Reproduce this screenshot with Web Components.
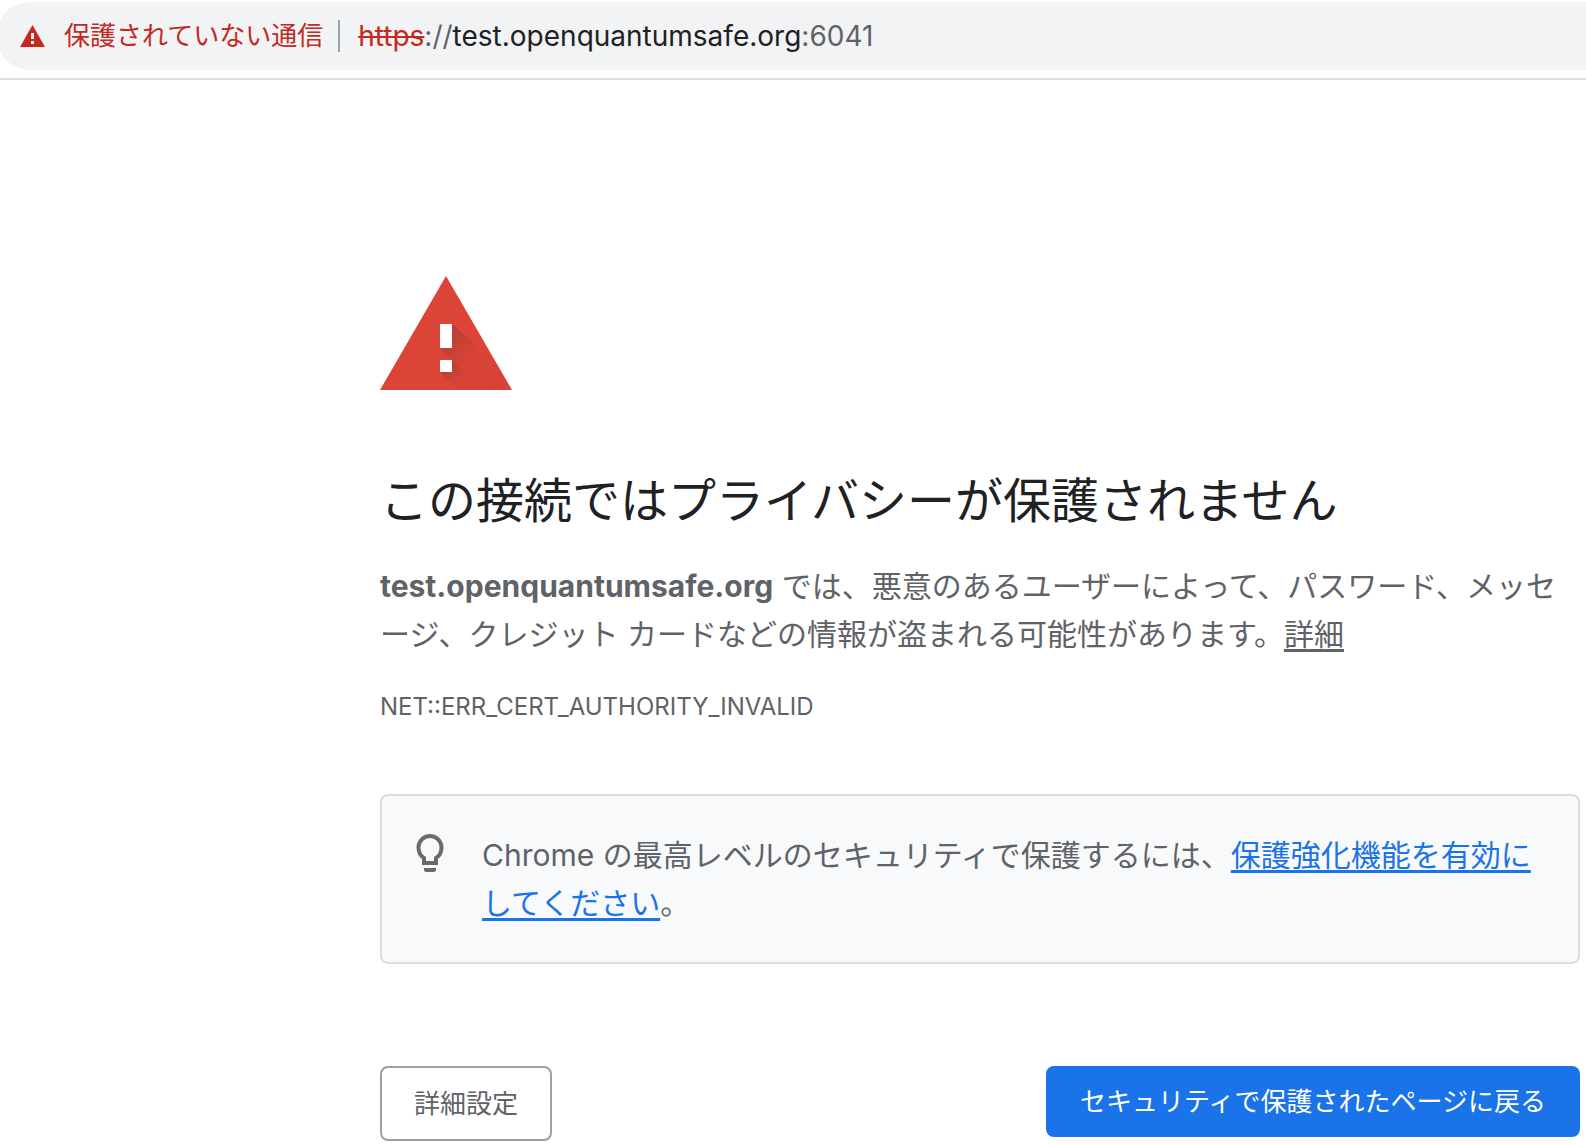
<!DOCTYPE html>
<html lang="ja">
<head>
<meta charset="utf-8">
<title>プライバシー エラー</title>
<style>
  body {
    margin: 0;
    background: #fff;
    color: #5f6368;
    font-family: Inter, "Noto Sans CJK JP", sans-serif;
    font-size: 30px;
    line-height: 48px;
  }
</style>
</head>
<body>

<address-bar>
  <span slot="status">保護されていない通信</span>
  <span slot="scheme">https</span>
  <span slot="host">test.openquantumsafe.org</span>
  <span slot="port">:6041</span>
</address-bar>

<security-interstitial>
  <span slot="heading">この接続ではプライバシーが保護されません</span>
  <strong slot="host">test.openquantumsafe.org</strong>
  <span slot="message">では、悪意のあるユーザーによって、パスワード、メッセージ、クレジット カードなどの情報が盗まれる可能性があります。</span>
  <span slot="code">NET::ERR_CERT_AUTHORITY_INVALID</span>
  <tip-box slot="tip">Chrome の最高レベルのセキュリティで保護するには、<a href="#enhanced">保護強化機能を有効にしてください</a>。</tip-box>
  <action-button slot="actions">詳細設定</action-button>
  <action-button slot="actions" primary>セキュリティで保護されたページに戻る</action-button>
</security-interstitial>

<script>
function attach(element, html) {
  const template = document.createElement('template')
  template.innerHTML = html
  element.attachShadow({ mode: 'open' }).append(template.content.cloneNode(true))
}

class AddressBar extends HTMLElement {
  constructor() {
    super()
    attach(this, `
      <style>
        :host {
          display: block;
          padding: 2px 0 8px;
          border-bottom: 2px solid #dadce0;
          overflow: hidden;
        }
        .pill {
          display: flex;
          align-items: center;
          height: 68px;
          margin-left: -4px;
          padding-left: 24px;
          border-radius: 34px 0 0 34px;
          background: #f1f3f4;
          font-size: 26px;
          line-height: 32px;
          white-space: nowrap;
        }
        svg { width: 25px; height: 22px; }
        .status, .scheme { color: #c5281f; }
        .status { margin-left: 19px; }
        .divider {
          width: 2px;
          height: 32px;
          margin: 0 18px 0 15px;
          background: #9aa0a6;
        }
        .url { font-size: 28px; }
        .scheme { text-decoration: line-through; text-decoration-thickness: 2px; }
        .host { color: #202124; }
      </style>
      <div class="pill">
        <svg viewBox="0 0 25 22" aria-hidden="true">
          <path fill="#c5281f" d="M12.500 0 25 22H0z"/>
          <path fill="#f1f3f4" d="M11 8h3v6h-3zM11 16h3v3h-3z"/>
        </svg>
        <span class="status"><slot name="status"></slot></span>
        <span class="divider"></span>
        <div class="url"><span class="scheme"><slot name="scheme"></slot></span>://<span class="host"><slot name="host"></slot></span><slot name="port"></slot></div>
      </div>
    `)
  }
}

class WarningIcon extends HTMLElement {
  constructor() {
    super()
    attach(this, `
      <style>
        :host { display: block; }
        svg { display: block; width: 132px; height: 114px; }
      </style>
      <svg viewBox="0 0 132 114" role="img" aria-label="警告">
        <defs>
          <linearGradient id="long" gradientUnits="userSpaceOnUse" x1="60" y1="60" x2="86" y2="86">
            <stop offset="0" stop-color="#3e2723" stop-opacity=".24"/>
            <stop offset="1" stop-color="#3e2723" stop-opacity=".02"/>
          </linearGradient>
          <linearGradient id="short" gradientUnits="userSpaceOnUse" x1="66" y1="90" x2="80" y2="104">
            <stop offset="0" stop-color="#3e2723" stop-opacity=".24"/>
            <stop offset="1" stop-color="#3e2723" stop-opacity=".02"/>
          </linearGradient>
        </defs>
        <path fill="#db4437" d="M66 0l66 114H0z"/>
        <path fill="url(#long)" d="M72 48l44 38 16 28h-30L60 72z"/>
        <path fill="url(#short)" d="M72 84l30 30H78L60 96z"/>
        <path fill="#fff" d="M60 48h12v24H60zM60 84h12v12H60z"/>
      </svg>
    `)
  }
}

class TipBox extends HTMLElement {
  constructor() {
    super()
    attach(this, `
      <style>
        :host {
          display: flex;
          gap: 38px;
          padding: 35px 36px 35px 34px;
          border: 2px solid #dadce0;
          border-radius: 8px;
          background: #f8f9fa;
        }
        svg { flex: none; width: 28px; height: 40px; margin-top: 2px; }
        p { margin: 0; line-break: loose; }
        ::slotted(a) {
          color: #1a73e8;
          text-decoration: underline;
          text-decoration-thickness: 3px;
          text-underline-offset: 4px;
          text-decoration-skip-ink: none;
        }
      </style>
      <svg viewBox="0 0 28 40" aria-hidden="true">
        <path fill="none" stroke="#6b6b6b" stroke-width="4" d="M8 30V25C4 22.500 2.500 18.500 2.500 14.500a11.500 11.500 0 0 1 23 0C25.500 18.500 24 22.500 20 25v5z"/>
        <path fill="#6b6b6b" d="M8 35h12v1.500q0 2.500-2.500 2.500h-7Q8 39 8 36.500z"/>
      </svg>
      <p><slot></slot></p>
    `)
  }
}

class ActionButton extends HTMLElement {
  constructor() {
    super()
    attach(this, `
      <style>
        :host { display: block; }
        button {
          display: block;
          padding: 16px 32px;
          border: 2px solid #9aa0a6;
          border-radius: 8px;
          background: #fff;
          color: #5f6368;
          font: inherit;
          font-size: 26px;
          line-height: 39px;
          cursor: pointer;
        }
        :host([primary]) button {
          padding: 16px 34px;
          border: 0;
          background: #1a73e8;
          color: #fff;
        }
      </style>
      <button type="button"><slot></slot></button>
    `)
  }
}

class SecurityInterstitial extends HTMLElement {
  constructor() {
    super()
    attach(this, `
      <style>
        :host {
          display: block;
          max-width: 1200px;
          margin: 0 6px 0 auto;
          padding-top: 196px;
        }
        h1 {
          margin: 82px 0 32px;
          color: #202124;
          font-size: 48px;
          font-weight: 400;
          line-height: 58px;
        }
        p { margin: 0; line-break: loose; }
        a {
          color: #5f6368;
          text-decoration-thickness: 3px;
          text-underline-offset: 4px;
          text-decoration-skip-ink: none;
        }
        .code { margin: 33px 0 71px; font-size: 24px; line-height: 32px; }
        .actions {
          display: flex;
          justify-content: space-between;
          align-items: flex-start;
          margin-top: 102px;
        }
      </style>
      <warning-icon></warning-icon>
      <h1><slot name="heading"></slot></h1>
      <p><slot name="host"></slot> <slot name="message"></slot><a href="#details">詳細</a></p>
      <p class="code"><slot name="code"></slot></p>
      <slot name="tip"></slot>
      <div class="actions"><slot name="actions"></slot></div>
    `)
  }
}

customElements.define('address-bar', AddressBar)
customElements.define('warning-icon', WarningIcon)
customElements.define('tip-box', TipBox)
customElements.define('action-button', ActionButton)
customElements.define('security-interstitial', SecurityInterstitial)
</script>
</body>
</html>
